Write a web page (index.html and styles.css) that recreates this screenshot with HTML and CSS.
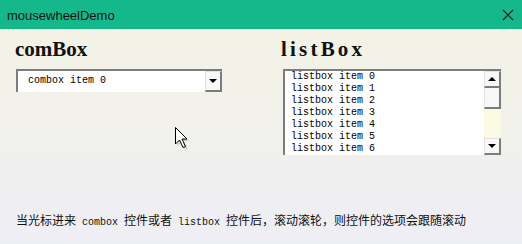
FILE: index.html
```html
<!DOCTYPE html>
<html lang="zh-CN">
<head>
    <meta charset="UTF-8">
    <meta name="viewport" content="width=device-width, initial-scale=1.0">
    <title>mousewheelDemo</title>
    <link rel="stylesheet" href="styles.css">
</head>
<body>

    <div class="ventana">

        <div class="barra">
            <span class="titulo">mousewheelDemo</span>
            <svg class="cerrar" width="12" height="12" viewBox="0 0 12 12">
                <path d="M1 1 L11 11 M11 1 L1 11" stroke="#1a1a1a" stroke-width="1.2" fill="none"/>
            </svg>
        </div>

        <div class="contenido">

            <div class="columnas">

                <div class="columna">
                    <h2 class="encabezado">comBox</h2>
                    <div class="combo">
                        <span class="combo_texto">combox item 0</span>
                        <span class="combo_boton"><i class="flecha_abajo"></i></span>
                    </div>
                </div>

                <div class="columna">
                    <h2 class="encabezado encabezado_ancho">listBox</h2>
                    <div class="lista">
                        <ul class="items">
                            <li>listbox item 0</li>
                            <li>listbox item 1</li>
                            <li>listbox item 2</li>
                            <li>listbox item 3</li>
                            <li>listbox item 4</li>
                            <li>listbox item 5</li>
                            <li>listbox item 6</li>
                        </ul>
                        <div class="scroll">
                            <span class="scroll_boton"><i class="flecha_arriba"></i></span>
                            <span class="scroll_pulgar"></span>
                            <span class="scroll_pista"></span>
                            <span class="scroll_boton"><i class="flecha_abajo"></i></span>
                        </div>
                    </div>
                </div>

            </div>

            <p class="nota">当光标进来<span class="codigo"> combox </span>控件或者<span class="codigo"> listbox </span>控件后，滚动滚轮，则控件的选项会跟随滚动</p>

        </div>

        <!-- puntero del raton encima del contenido -->
        <svg class="puntero" width="16" height="24" viewBox="0 0 16 24">
            <path d="M2.5 2.5 V19 L6.5 15 L10 22.5 L12.5 21.5 L9 14 H14 Z" fill="#888" opacity="0.35"/>
            <path d="M0.5 0.5 V17 L4.5 13 L8 20.5 L10.5 19.5 L7 12 H12 Z" fill="#fff" stroke="#000" stroke-width="1"/>
        </svg>

    </div>

</body>
</html>
```

FILE: styles.css
```css
* {
    box-sizing: border-box;
}
body {
    margin: 0;
    background: #f2f1ea;
}
.ventana {
    position: relative;
    width: 522px;
    height: 244px;
    background: linear-gradient(#f4f3e3, #eeeef5);
}
.barra {
    height: 29px;
    background: #15b88b;
    display: flex;
    align-items: center;
    justify-content: space-between;
    padding: 0 8px 0 7px;
}
.titulo {
    font-family: "Liberation Sans", Arial, sans-serif;
    font-size: 13px;
    color: #111;
    margin-top: 1px;
}
.cerrar {
    margin-top: 1px;
}
.contenido {
    display: flex;
    flex-direction: column;
    padding: 7px 0 0 15px;
}
.columnas {
    display: grid;
    grid-template-columns: 266px 219px;
}
.encabezado {
    margin: 0 0 7px 0;
    font-family: "Liberation Serif", "Times New Roman", serif;
    font-size: 21px;
    line-height: 26px;
    font-weight: bold;
    color: #111;
}
.encabezado_ancho {
    letter-spacing: 3.2px;
}
.combo {
    display: flex;
    width: 206px;
    height: 23px;
    margin-left: 1px;
    background: #fff;
    border-top: 2px solid #7c7c7c;
    border-left: 2px solid #7c7c7c;
}
.combo_texto {
    flex: 1;
    padding-left: 10px;
    font-family: "Liberation Mono", "DejaVu Sans Mono", monospace;
    font-size: 10px;
    line-height: 20px;
    color: #000;
}
.combo_boton,
.scroll_boton {
    display: flex;
    align-items: center;
    justify-content: center;
    width: 17px;
    background: #f8f8f8;
    border-right: 2px solid #7c7c7c;
    border-bottom: 2px solid #7c7c7c;
    border-left: 1px solid #e2e2e2;
    border-top: 1px solid #e2e2e2;
}
.flecha_abajo {
    width: 0;
    height: 0;
    border-left: 4px solid transparent;
    border-right: 4px solid transparent;
    border-top: 4px solid #000;
}
.flecha_arriba {
    width: 0;
    height: 0;
    border-left: 4px solid transparent;
    border-right: 4px solid transparent;
    border-bottom: 4px solid #000;
}
.lista {
    display: flex;
    width: 218px;
    height: 86px;
    margin-left: 2px;
    background: #fff;
    border-top: 2px solid #7c7c7c;
    border-left: 2px solid #7c7c7c;
    overflow: hidden;
}
.items {
    flex: 1;
    margin: 0;
    padding: 0 0 0 6px;
    list-style: none;
}
.items li {
    font-family: "Liberation Mono", "DejaVu Sans Mono", monospace;
    font-size: 10px;
    line-height: 12px;
    color: #000;
}
.scroll {
    display: flex;
    flex-direction: column;
    width: 17px;
}
.scroll_boton {
    height: 17px;
}
.scroll_pulgar {
    height: 21px;
    background: #f8f8f8;
    border-right: 2px solid #7c7c7c;
    border-bottom: 2px solid #7c7c7c;
    border-left: 1px solid #e2e2e2;
}
.scroll_pista {
    flex: 1;
    background: #fbfbe4;
}
.nota {
    margin: 57px 0 0 1px;
    font-family: "Noto Sans CJK SC", "Liberation Sans", sans-serif;
    font-size: 12px;
    line-height: 16px;
    color: #111;
}
.codigo {
    font-family: "Liberation Mono", "DejaVu Sans Mono", monospace;
    font-size: 10px;
    white-space: pre;
}
.puntero {
    position: absolute;
    left: 175px;
    top: 127px;
}
```
